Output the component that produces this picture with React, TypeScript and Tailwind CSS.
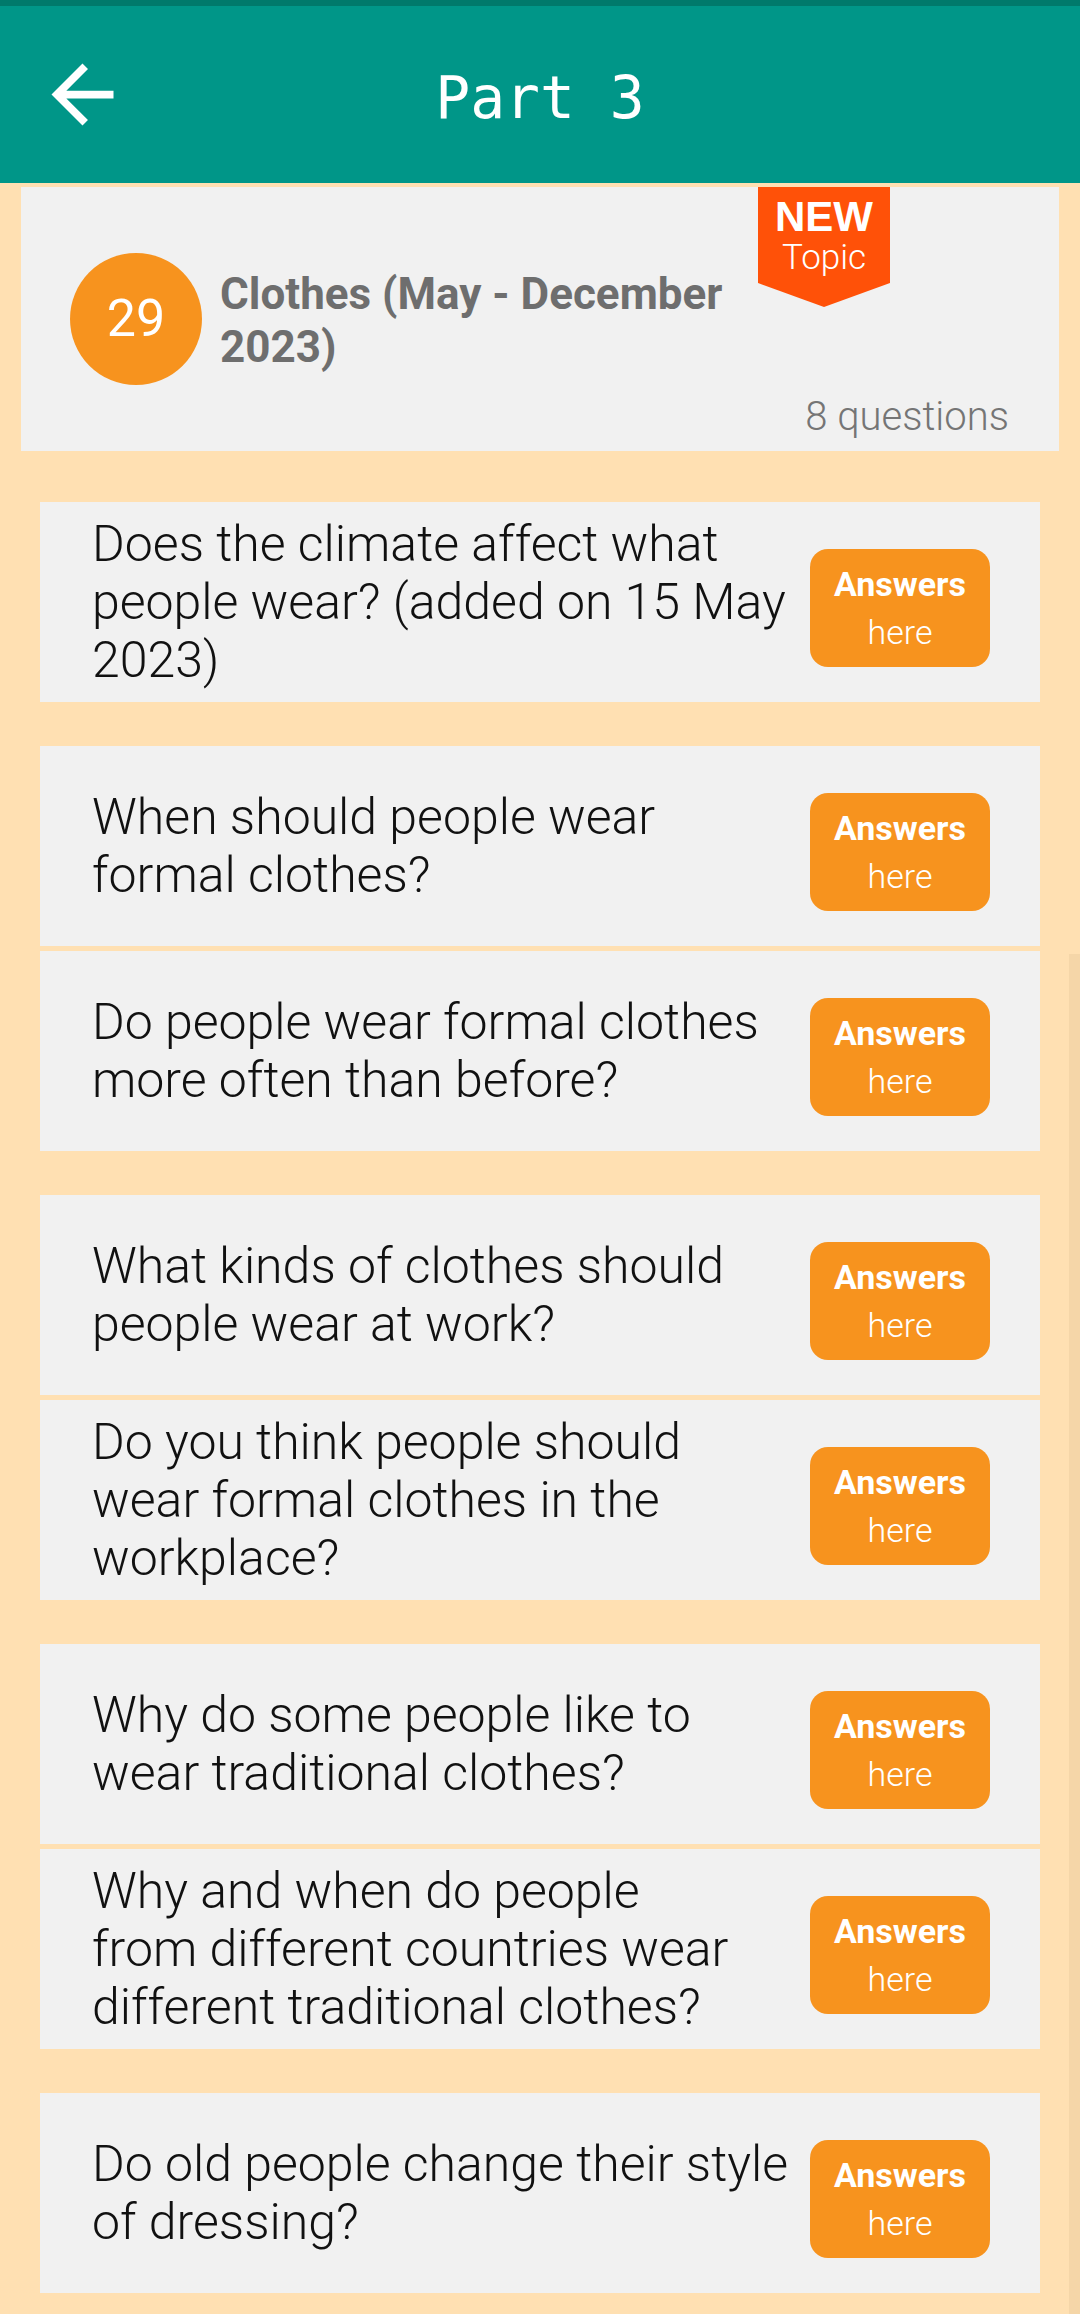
import React from "react";

// question rows, grouped the way the app spaces them
const groups: string[][] = [
  ["Does the climate affect what people wear? (added on 15 May 2023)"],
  [
    "When should people wear formal clothes?",
    "Do people wear formal clothes more often than before?",
  ],
  [
    "What kinds of clothes should people wear at work?",
    "Do you think people should wear formal clothes in the workplace?",
  ],
  [
    "Why do some people like to wear traditional clothes?",
    "Why and when do people\nfrom different countries wear different traditional clothes?",
  ],
  ["Do old people change their style of dressing?"],
];

function BackArrow() {
  return (
    <svg viewBox="0 0 24 24" className="h-[93px] w-[93px]" fill="white">
      <path d="M20 11H7.83l5.59-5.59L12 4l-8 8 8 8 1.41-1.41L7.83 13H20v-2z" />
    </svg>
  );
}

function QuestionCard({ text }: { text: string }) {
  return (
    <div className="flex h-[200px] items-center bg-[#F1F1F1] pl-[52px] pr-[50px]">
      <p className="flex-1 whitespace-pre-line pr-[14px] text-[50px] font-light leading-[58px] text-[#111111]">
        {text}
      </p>
      <button className="mt-[12px] flex h-[118px] w-[180px] shrink-0 flex-col items-center justify-center rounded-[18px] bg-[#F7931E] text-white">
        <span className="text-[34px] font-bold leading-[48px]">Answers</span>
        <span className="text-[34px] font-light leading-[48px]">here</span>
      </button>
    </div>
  );
}

export default function App() {
  return (
    <div className="relative min-h-[2314px] overflow-hidden bg-[#FFE0B2] font-['Roboto','Liberation_Sans',sans-serif]">
      <div className="h-[6px] bg-[#00796B]" />
      <header className="relative flex h-[177px] items-center justify-center bg-[#009688]">
        <div className="absolute left-[36px] top-[42px]">
          <BackArrow />
        </div>
        <h1 className="mt-[6px] font-['DejaVu_Sans_Mono',monospace] text-[58px] leading-none text-white">
          Part 3
        </h1>
      </header>

      <div className="relative mx-[21px] mt-[4px] flex h-[264px] items-center bg-[#F1F1F1] pl-[49px]">
        <div className="flex h-[132px] w-[132px] shrink-0 items-center justify-center rounded-full bg-[#F7931E] text-[52px] text-white">
          29
        </div>
        <h2 className="ml-[18px] mt-[4px] w-[530px] text-[44px] font-bold leading-[53px] text-[#6E6E6E]">
          Clothes (May - December 2023)
        </h2>
        <div className="absolute left-[737px] top-0 flex h-[120px] w-[132px] flex-col items-center bg-[#FF5108] pt-[8px] text-white [clip-path:polygon(0_0,100%_0,100%_80%,50%_100%,0_80%)]">
          <span className="font-['Liberation_Sans',sans-serif] text-[42px] font-bold leading-[44px]">
            NEW
          </span>
          <span className="text-[35px] font-light leading-[38px]">Topic</span>
        </div>
        <span className="absolute bottom-[12px] right-[50px] text-[40px] font-light leading-[44px] text-[#757575]">
          8 questions
        </span>
      </div>

      <div className="mt-[51px] flex flex-col gap-[44px] px-[40px]">
        {groups.map((g, i) => (
          <div key={i} className="flex flex-col gap-[5px]">
            {g.map((q) => (
              <QuestionCard key={q} text={q} />
            ))}
          </div>
        ))}
      </div>

      {/* scrollbar thumb */}
      <div className="absolute right-0 top-[954px] h-[1360px] w-[11px] bg-[#F5D6A8]" />
    </div>
  );
}
